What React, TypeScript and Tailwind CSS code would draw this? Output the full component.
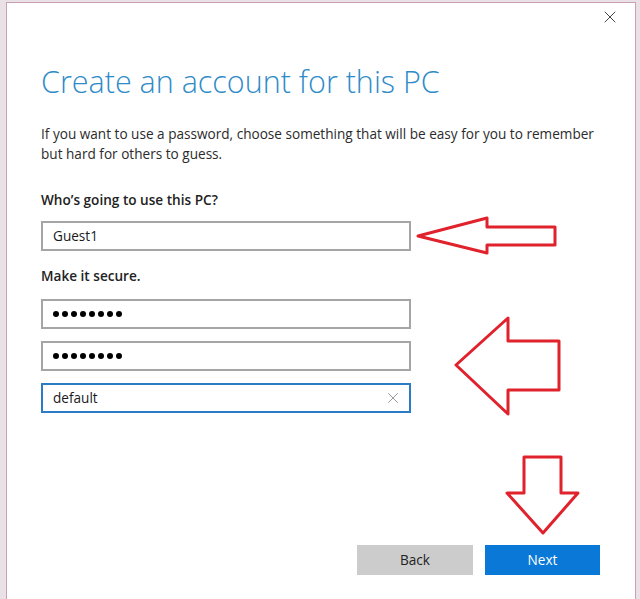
import { X } from "lucide-react";

const font = { fontFamily: '"Open Sans", "Noto Sans", sans-serif' };

function Field({
  value,
  secret,
  focused,
}: {
  value: string;
  secret?: boolean;
  focused?: boolean;
}) {
  return (
    <div
      className={
        "flex h-[30px] w-[370px] items-center border-2 pl-[10px] pr-[7px] " +
        (focused ? "border-[#2b7cc4]" : "border-[#a5a5a5]")
      }
    >
      {secret ? (
        <span className="flex gap-[3px]">
          {Array.from({ length: value.length }).map((_, i) => (
            <span key={i} className="h-[6px] w-[6px] rounded-full bg-black" />
          ))}
        </span>
      ) : (
        <span className="flex-1 text-[13.6px] text-[#1a1a1a]">{value}</span>
      )}
      {focused && <X className="h-[18px] w-[18px] text-[#777]" strokeWidth={1} />}
    </div>
  );
}

function Arrows() {
  return (
    <svg
      className="pointer-events-none absolute left-0 top-0"
      width="640"
      height="599"
      viewBox="0 0 640 599"
      fill="none"
      stroke="#e0222c"
      strokeWidth="3"
      strokeLinejoin="round"
    >
      <polygon points="418,236 487,218 487,227 555,227 555,245 487,245 487,253" />
      <polygon points="456,365 508,318 508,341 559,341 559,390 508,390 508,414" />
      <polygon points="524,457 561,457 561,493 578,493 543,533 507,493 524,493" />
    </svg>
  );
}

export default function App() {
  return (
    <div
      className="relative flex h-[599px] w-[640px] bg-[#e9e1e5] pl-[6px] pr-[4px] pt-[2px] pb-0"
      style={font}
    >
      <div className="flex flex-1 flex-col border border-b-0 border-[#caa0b2] bg-white">
        <div className="flex justify-end pr-[15px] pt-[4px]">
          <X className="h-[20px] w-[20px] text-[#333]" strokeWidth={1.1} />
        </div>
        <div className="flex flex-col pl-[34px]">
          <h1 className="mt-[34px] text-[30.5px] font-light leading-[40px] text-[#2f8bc8]">
            Create an account for this PC
          </h1>
          <p className="mt-[23px] text-[13.6px] leading-[20px] text-[#2b2b2b]">
            If you want to use a password, choose something that will be easy for you to remember
            <br />
            but hard for others to guess.
          </p>
          <div className="mt-[26px] text-[13.6px] font-semibold text-[#222]">
            Who’s going to use this PC?
          </div>
          <div className="mt-[11px]">
            <Field value="Guest1" />
          </div>
          <div className="mt-[15px] text-[13.6px] font-semibold text-[#222]">Make it secure.</div>
          <div className="mt-[12px] flex flex-col gap-[12px]">
            <Field value="12345678" secret />
            <Field value="12345678" secret />
            <Field value="default" focused />
          </div>
        </div>
        <div className="mt-auto mb-[24px] flex justify-end gap-[12px] pr-[35px]">
          <button className="h-[30px] w-[116px] bg-[#cccccc] text-[13.6px] text-[#222]">Back</button>
          <button className="h-[30px] w-[115px] bg-[#0a78d6] text-[13.6px] text-white">Next</button>
        </div>
      </div>
      <Arrows />
    </div>
  );
}
